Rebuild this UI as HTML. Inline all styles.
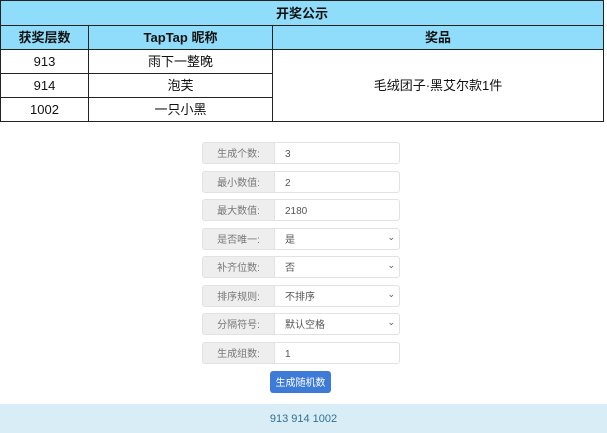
<!DOCTYPE html>
<html><head><meta charset="utf-8"><style>
*{box-sizing:border-box;margin:0;padding:0}
body{width:607px;height:433px;background:#fff;font-family:"Liberation Sans","Noto Sans CJK SC",sans-serif;position:relative;overflow:hidden}
table{position:absolute;left:0;top:0;width:604px;border-collapse:collapse;font-size:13px;color:#111}
td,th{border:1px solid #222;text-align:center;height:24px;padding:0;line-height:1}
th{background:#8fddfa;font-weight:bold;font-size:13px}
.row{position:absolute;left:202px;width:198px;height:22px;font-size:10px;color:#555}
.lab,.inp{position:absolute;top:0;height:22px;border:1px solid #e2e2e2;display:flex;align-items:center;line-height:1;padding-top:3px}
.lab{left:0;width:73px;background:#eee;border-radius:3px 0 0 3px;justify-content:center;color:#777}
.inp{left:72px;width:126px;border-radius:0 3px 3px 0;padding-left:10px;background:#fff}
.inp.s::after{content:"⌄";position:absolute;right:4px;top:4px;font-size:9px;color:#555}
.btn{position:absolute;left:270px;top:371px;width:61px;height:22px;background:#3e7bd7;border-radius:3px;color:#fff;font-size:10px;display:flex;align-items:center;justify-content:center;line-height:1;padding-top:3px}
.res{position:absolute;left:0;top:404px;width:607px;height:29px;background:#d9edf7;color:#31708f;font-size:11px;display:flex;align-items:center;justify-content:center;line-height:1;padding-top:2px}
</style></head><body>
<table>
<tr><th colspan="3" style="height:25px">开奖公示</th></tr>
<tr><th style="width:88px">获奖层数</th><th style="width:184px">TapTap 昵称</th><th>奖品</th></tr>
<tr><td>913</td><td>雨下一整晚</td><td rowspan="3">毛绒团子·黑艾尔款1件</td></tr>
<tr><td>914</td><td>泡芙</td></tr>
<tr><td>1002</td><td>一只小黑</td></tr>
</table>
<div class="row" style="top:142px"><div class="lab">生成个数:</div><div class="inp">3</div></div>
<div class="row" style="top:171px"><div class="lab">最小数值:</div><div class="inp">2</div></div>
<div class="row" style="top:199px"><div class="lab">最大数值:</div><div class="inp">2180</div></div>
<div class="row" style="top:228px"><div class="lab">是否唯一:</div><div class="inp s">是</div></div>
<div class="row" style="top:256px"><div class="lab">补齐位数:</div><div class="inp s">否</div></div>
<div class="row" style="top:285px"><div class="lab">排序规则:</div><div class="inp s">不排序</div></div>
<div class="row" style="top:313px"><div class="lab">分隔符号:</div><div class="inp s">默认空格</div></div>
<div class="row" style="top:342px"><div class="lab">生成组数:</div><div class="inp">1</div></div>
<div class="btn">生成随机数</div>
<div class="res">913 914 1002</div>
</body></html>
